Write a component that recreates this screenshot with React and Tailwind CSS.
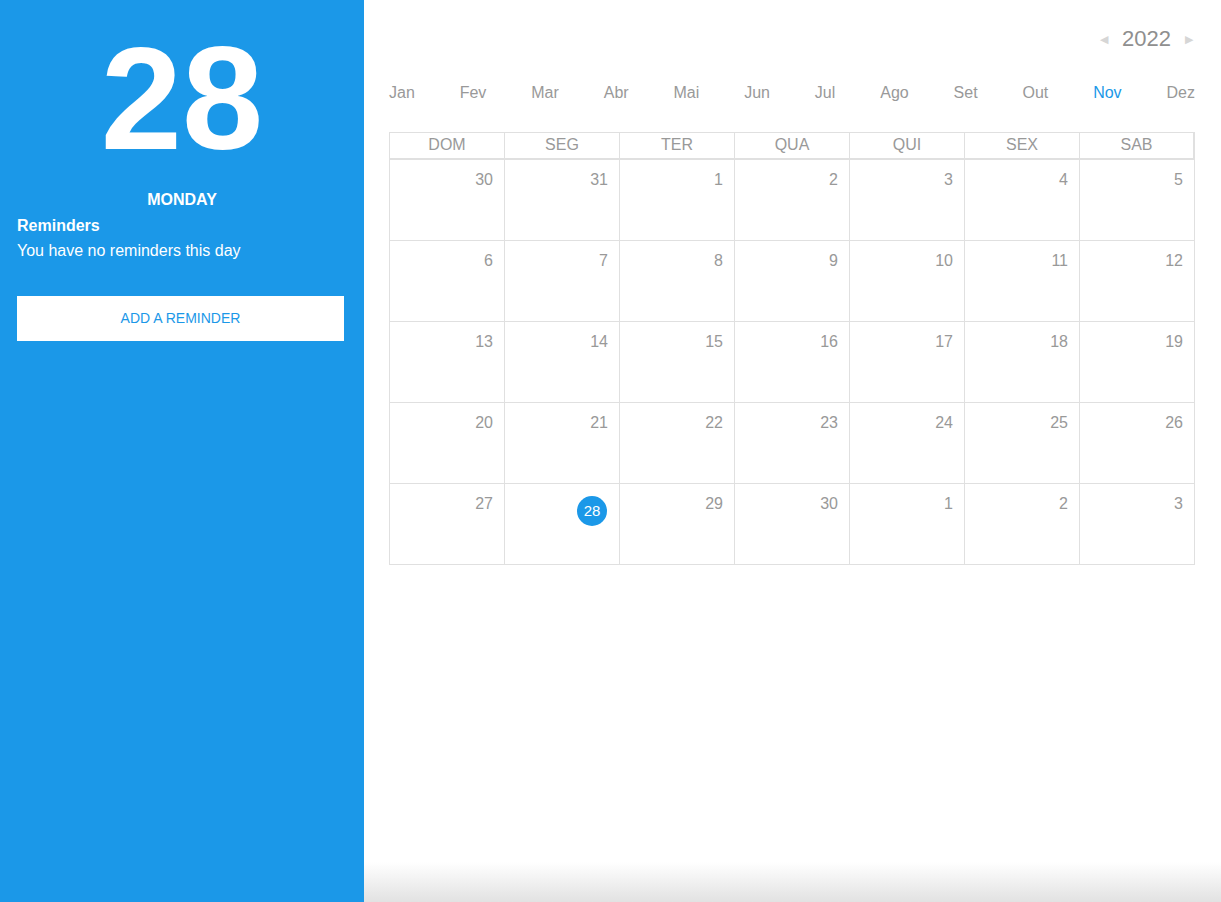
import React from "react";

const months = ["Jan","Fev","Mar","Abr","Mai","Jun","Jul","Ago","Set","Out","Nov","Dez"];
const days = ["DOM","SEG","TER","QUA","QUI","SEX","SAB"];
const weeks = [
  [30,31,1,2,3,4,5],
  [6,7,8,9,10,11,12],
  [13,14,15,16,17,18,19],
  [20,21,22,23,24,25,26],
  [27,28,29,30,1,2,3],
];

export default function App() {
  return (
    <div className="flex h-[902px] w-full overflow-hidden bg-white" style={{ fontFamily: '"Liberation Sans", Arial, sans-serif' }}>
      <aside className="flex w-[364px] shrink-0 flex-col bg-[#1b98e8] px-[17px] text-white">
        <div className="mt-[26px] text-center text-[146px] font-bold leading-[146px]">28</div>
        <div className="mt-[18px] text-center text-[16px] font-bold leading-[20px]">MONDAY</div>
        <div className="mt-[6px] text-[16px] font-bold leading-[20px]">Reminders</div>
        <div className="mt-[5px] text-[16px] leading-[20px]">You have no reminders this day</div>
        <button className="mt-[35px] flex h-[45px] w-[327px] items-center justify-center bg-white text-[14px] text-[#1b98e8]">
          ADD A REMINDER
        </button>
      </aside>
      <main className="flex flex-1 flex-col">
        <div className="flex flex-1 flex-col px-[25px] pr-[26px]">
          <div className="mt-[26px] flex items-center justify-end gap-[14px] pr-[2px] text-[#999]">
            <span className="text-[11px] text-[#d6d6d6]">◀</span>
            <span className="text-[22px] leading-[26px] text-[#8f8f8f]">2022</span>
            <span className="text-[11px] text-[#d6d6d6]">▶</span>
          </div>
          <div className="mt-[31px] flex justify-between text-[16px] leading-[20px] text-[#999]">
            {months.map((m) => (
              <span key={m} className={m === "Nov" ? "text-[#1b98e8]" : ""}>{m}</span>
            ))}
          </div>
          <div className="mt-[29px] w-[806px]">
            <div className="grid grid-cols-7 border-t border-l border-[#e0e0e0]">
              {days.map((d) => (
                <div key={d} className="h-[27px] border-r border-b-2 border-[#e0e0e0] text-center text-[16px] leading-[23px] text-[#999] last:border-r-2">
                  {d}
                </div>
              ))}
            </div>
            <div className="grid grid-cols-7 border-l border-[#e0e0e0]">
              {weeks.flat().map((n, i) => (
                <div key={i} className="flex h-[81px] justify-end border-r border-b border-[#e0e0e0] pr-[11px] pt-[11px]">
                  {i === 29 ? (
                    <span className="mt-[1px] mr-[1px] flex h-[30px] w-[30px] items-center justify-center rounded-full bg-[#1b98e8] text-[15px] text-white">28</span>
                  ) : (
                    <span className="text-[16px] leading-[18px] text-[#999]">{n}</span>
                  )}
                </div>
              ))}
            </div>
          </div>
        </div>
        <div className="h-[40px] bg-gradient-to-b from-white to-[#e2e2e2]" />
      </main>
    </div>
  );
}
